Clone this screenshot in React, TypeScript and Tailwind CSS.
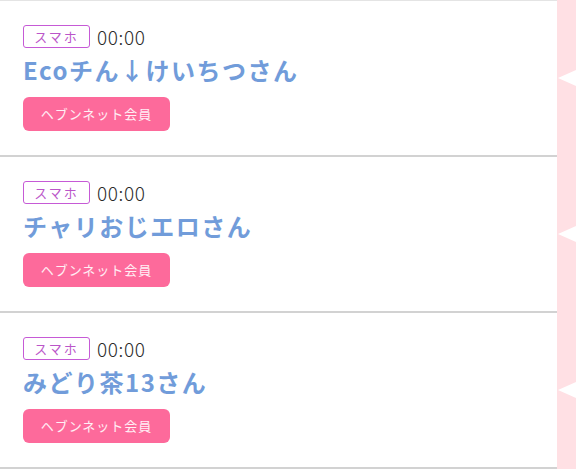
import React from 'react';

const users = ['Ecoチん↓けいちつさん', 'チャリおじエロさん', 'みどり茶13さん'];

const font = { fontFamily: '"Noto Sans CJK JP", "Noto Sans", sans-serif' };

const Row: React.FC<{ name: string }> = ({ name }) => {
  return (
    <div className="flex h-[156px]">
      <div className="flex-1 flex flex-col border-b-2 border-[#d2d2d2] pl-[23px] pt-[24px] bg-white">
        <div className="flex items-center gap-[7px]">
          <span className="h-[23px] w-[67px] flex items-center justify-center rounded-[3px] border border-[#c65ad6] text-[13px] text-[#bb55c9] leading-none tracking-[2px]">
            スマホ
          </span>
          <span className="text-[19px] text-[#2a2a2a] leading-none font-light tracking-[0.6px]">00:00</span>
        </div>
        <div className="mt-[6px] text-[24px] font-bold text-[#719cda] leading-[32px] tracking-[1.5px]">{name}</div>
        <div className="mt-[11px] h-[34px] w-[147px] flex items-center justify-center rounded-[6px] bg-[#fd6a9b] text-[13px] text-white/90 tracking-[1px]">
          ヘブンネット会員
        </div>
      </div>
      <div className="w-[19px] bg-[#ffe0e4] flex items-center justify-end">
        <svg width="19" height="16" viewBox="0 0 19 16" className="-mt-[2px]">
          <polygon points="1,8 19,0 19,16" fill="#ffffff" />
        </svg>
      </div>
    </div>
  );
};

export default function App() {
  return (
    <div className="w-[576px] h-[470px] overflow-hidden bg-white" style={font}>
      <div className="flex h-[1px]">
        <div className="flex-1 bg-[#e4e4e4]" />
        <div className="w-[19px] bg-[#ffe0e4]" />
      </div>
      {users.map((u) => (
        <Row key={u} name={u} />
      ))}
    </div>
  );
}
